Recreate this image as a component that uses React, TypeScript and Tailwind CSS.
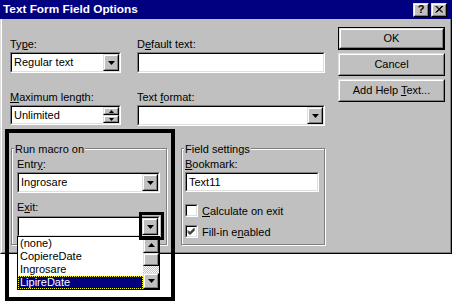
import type { ReactNode } from 'react';

const font = "font-['Liberation_Sans',Arial,sans-serif]";

function Sunken({ className, children }: { className: string; children?: ReactNode }) {
  return (
    <div className={`border border-t-[#808080] border-l-[#808080] border-b-white border-r-white ${className}`}>
      <div className="h-full flex items-center bg-white border border-t-black border-l-black border-b-[#dfdfdf] border-r-[#dfdfdf]">
        {children}
      </div>
    </div>
  );
}

function Raised({ className, children }: { className: string; children?: ReactNode }) {
  return (
    <div className={`border border-t-[#dfdfdf] border-l-[#dfdfdf] border-b-black border-r-black ${className}`}>
      <div className="h-full flex items-center justify-center bg-[#c0c0c0] border border-t-white border-l-white border-b-[#808080] border-r-[#808080]">
        {children}
      </div>
    </div>
  );
}

function Tri({ up = false, small = false }: { up?: boolean; small?: boolean }) {
  const w = small ? 5 : 7;
  const h = small ? 3 : 4;
  const pts = up ? `0,${h} ${w},${h} ${w / 2},0` : `0,0 ${w},0 ${w / 2},${h}`;
  return (
    <svg width={w} height={h} viewBox={`0 0 ${w} ${h}`} className="block">
      <polygon points={pts} fill="#000" />
    </svg>
  );
}

function Combo({ className, value = '' }: { className: string; value?: string }) {
  return (
    <Sunken className={`h-[21px] ${className}`}>
      <span className="flex-1 pl-[2px] leading-[13px]">{value}</span>
      <Raised className="w-[16px] h-full"><Tri /></Raised>
    </Sunken>
  );
}

function Label({ text, u, className = '' }: { text: string; u: number; className?: string }) {
  return (
    <div className={`h-[14px] leading-[14px] whitespace-nowrap ${className}`}>
      {text.slice(0, u)}<span className="underline underline-offset-[1px]">{text[u]}</span>{text.slice(u + 1)}
    </div>
  );
}

function Group({ title, className, children }: { title: string; className: string; children: ReactNode }) {
  return (
    <div className={`relative border border-[#808080] shadow-[inset_1px_1px_0_#fff,1px_1px_0_#fff] ${className}`}>
      <span className="absolute -top-[7px] left-[2px] px-[1px] bg-[#c0c0c0] h-[14px] leading-[14px]">{title}</span>
      {children}
    </div>
  );
}

function Check({ checked, text, u }: { checked: boolean; text: string; u: number }) {
  return (
    <div className="flex items-center h-[13px]">
      <Sunken className="w-[13px] h-[13px]">
        {checked && (
          <svg width="9" height="9" viewBox="0 0 9 9" className="block">
            <path d="M1 3.5 L3 5.5 L7.5 1 M1 4.5 L3 6.5 L7.5 2 M1 5.5 L3 7.5 L7.5 3" stroke="#000" strokeWidth="1" fill="none" />
          </svg>
        )}
      </Sunken>
      <Label text={text} u={u} className="ml-[4px]" />
    </div>
  );
}

function Button({ text, u, def = false }: { text: string; u?: number; def?: boolean }) {
  const inner = (
    <Raised className="h-full">
      {u === undefined ? text : (
        <span>{text.slice(0, u)}<span className="underline underline-offset-[1px]">{text[u]}</span>{text.slice(u + 1)}</span>
      )}
    </Raised>
  );
  return def ? (
    <div className="h-[23px] border border-black">{inner}</div>
  ) : (
    <div className="h-[23px]">{inner}</div>
  );
}

const items = ['(none)', 'CopiereDate', 'Ingrosare', 'LipireDate'];

export default function App() {
  return (
    <div className={`relative w-[452px] h-[303px] bg-white overflow-hidden text-[11px] text-black ${font}`}>
      <div className="h-[254px] flex flex-col bg-[#c0c0c0]">
        <div className="h-[19px] bg-[#000080] flex items-center pl-[3px] pr-[5px]">
          <span className="font-bold text-white text-[11.8px]">Text Form Field Options</span>
          <div className="ml-auto flex gap-[2px]">
            <Raised className="w-[16px] h-[14px]">
              <span className="font-bold text-[11px] leading-none">?</span>
            </Raised>
            <Raised className="w-[16px] h-[14px]">
              <svg width="8" height="7" viewBox="0 0 8 7" className="block">
                <path d="M0.5 0 L7 6.5 M1.5 0 L8 6.5 M7 0 L0.5 6.5 M8 0 L1.5 6.5" stroke="#000" strokeWidth="1" />
              </svg>
            </Raised>
          </div>
        </div>
        <div className="flex-1 border-l border-l-[#dfdfdf] border-r border-r-black border-b border-b-black">
          <div className="h-full flex border-l border-l-white border-r border-r-[#808080] border-b border-b-[#808080]">
            <div className="pl-[8px] pt-[18px] flex flex-col">
              <div className="flex gap-[16px] items-start">
                <div className="w-[111px]">
                  <Label text="Type:" u={2} className="mb-[1px]" />
                  <Combo className="w-[111px]" value="Regular text" />
                </div>
                <div className="w-[188px]">
                  <Label text="Default text:" u={1} className="mb-[1px]" />
                  <Sunken className="h-[21px] w-[188px]" />
                </div>
              </div>
              <div className="flex gap-[16px] items-start mt-[17px]">
                <div className="w-[111px]">
                  <Label text="Maximum length:" u={0} className="mb-[1px]" />
                  <Sunken className="h-[20px] w-[111px]">
                    <span className="flex-1 pl-[2px]">Unlimited</span>
                    <div className="w-[16px] h-full flex flex-col">
                      <Raised className="h-1/2"><Tri up small /></Raised>
                      <Raised className="h-1/2"><Tri small /></Raised>
                    </div>
                  </Sunken>
                </div>
                <div className="w-[188px]">
                  <Label text="Text format:" u={5} className="mb-[1px]" />
                  <Combo className="w-[188px]" />
                </div>
              </div>
              <div className="flex mt-[22px] ml-[1px] gap-[14px]">
                <Group title="Run macro on" className="w-[156px] h-[97px] pt-[8px] pl-[5px]">
                  <Label text="Entry:" u={4} className="mb-[1px]" />
                  <Combo className="w-[143px]" value="Ingrosare" />
                  <Label text="Exit:" u={1} className="mt-[7px] mb-[2px]" />
                  <Combo className="w-[143px]" />
                </Group>
                <Group title="Field settings" className="w-[144px] h-[97px] pt-[8px] pl-[3px]">
                  <Label text="Bookmark:" u={0} className="mb-[1px]" />
                  <Sunken className="h-[20px] w-[134px]">
                    <span className="pl-[2px]">Text11</span>
                  </Sunken>
                  <div className="mt-[12px] flex flex-col gap-[8px]">
                    <Check checked={false} text="Calculate on exit" u={0} />
                    <Check checked text="Fill-in enabled" u={9} />
                  </div>
                </Group>
              </div>
            </div>
            <div className="ml-auto mr-[5px] mt-[8px] w-[107px] flex flex-col gap-[3px]">
              <Button text="OK" def />
              <Button text="Cancel" />
              <Button text="Add Help Text..." u={9} />
            </div>
          </div>
        </div>
      </div>

      {/* open drop-down list of the Exit box */}
      <div className="absolute left-[17px] top-[236px] w-[143px] h-[54px] border border-black bg-white flex">
        <div className="flex-1 flex flex-col">
          {items.map((it, i) =>
            i === 3 ? (
              <div key={it} className="h-[13px] leading-[11px] pl-[1px] bg-[#000080] text-white border border-dotted border-[#ffff00]">{it}</div>
            ) : (
              <div key={it} className="h-[13px] leading-[13px] pl-[2px]">{it}</div>
            )
          )}
        </div>
        <div className="w-[16px] flex flex-col">
          <Raised className="h-[16px]"><Tri up /></Raised>
          <Raised className="h-[13px]" />
          <div className="flex-1 bg-[repeating-conic-gradient(#ffffff_0_25%,#c0c0c0_0_50%)] bg-[length:2px_2px]" />
          <Raised className="h-[16px]"><Tri /></Raised>
        </div>
      </div>

      {/* black highlight frames drawn over the screenshot */}
      <div className="absolute left-[5px] top-[129px] w-[170px] h-[172px] border-4 border-black pointer-events-none" />
      <div className="absolute left-[139px] top-[212px] w-[25px] h-[28px] border-[3px] border-black pointer-events-none" />
    </div>
  );
}
